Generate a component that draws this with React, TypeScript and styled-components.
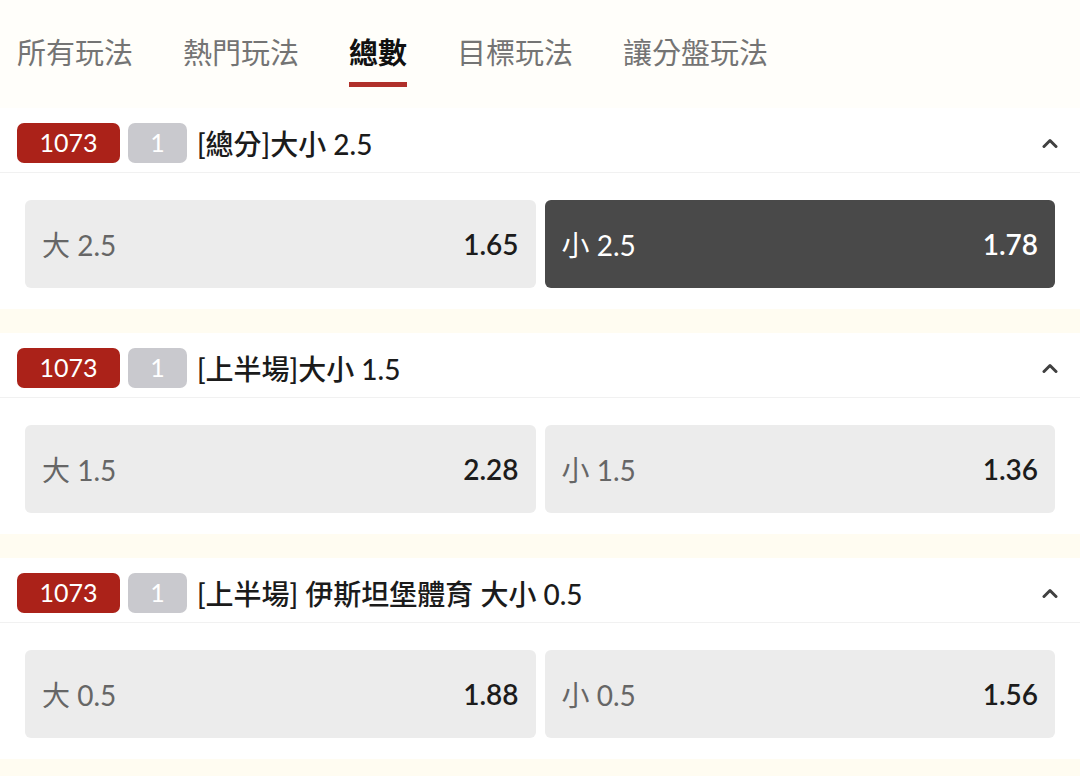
import React from "react";
import styled, { createGlobalStyle } from "styled-components";

const GlobalStyle = createGlobalStyle`
  html, body {
    margin: 0;
    padding: 0;
    background: #fffcf1;
  }
  body {
    font-family: "Lato", "Noto Sans CJK TC", "Noto Sans", sans-serif;
    -webkit-font-smoothing: antialiased;
  }
  * { box-sizing: border-box; }
`;

const Page = styled.div`
  width: 1080px;
  min-height: 776px;
  background: #fffcf1;
`;

const TabBar = styled.nav`
  height: 108px;
  display: flex;
  align-items: flex-start;
  gap: 50px;
  padding: 34px 0 0 17px;
  background: #fffefa;
`;

const Tab = styled.div<{ $active?: boolean }>`
  display: flex;
  flex-direction: column;
  align-items: stretch;
  font-family: "Noto Sans CJK TC", "Lato", sans-serif;
  font-size: 29px;
  line-height: 34px;
  font-weight: ${(p) => (p.$active ? 700 : 400)};
  color: ${(p) => (p.$active ? "#111111" : "#747474")};
  white-space: nowrap;
`;

const TabLine = styled.span<{ $active?: boolean }>`
  display: block;
  margin-top: 14px;
  height: 5px;
  background: ${(p) => (p.$active ? "#b0302a" : "transparent")};
`;

const Card = styled.section`
  background: #ffffff;
  margin-bottom: 24px;
`;

const CardHeader = styled.header`
  height: 65px;
  display: flex;
  align-items: center;
  padding: 5px 22px 0 17px;
  border-bottom: 1px solid #f1f1f1;
`;

const Badge = styled.span<{ $tone: "red" | "grey" }>`
  display: inline-flex;
  align-items: center;
  justify-content: center;
  height: 40px;
  width: ${(p) => (p.$tone === "red" ? "103px" : "59px")};
  margin-right: ${(p) => (p.$tone === "red" ? "8px" : "10px")};
  border-radius: 7px;
  background: ${(p) => (p.$tone === "red" ? "#ab2219" : "#c9c9ce")};
  color: #ffffff;
  font-family: "Lato", sans-serif;
  font-size: 25px;
  line-height: 1;
`;

const Title = styled.h3`
  flex: 1;
  margin: 0;
  font-family: "Lato", "Noto Sans CJK TC", sans-serif;
  font-size: 28px;
  font-weight: 500;
  color: #1b1b1b;
  white-space: nowrap;
`;

const Chevron = styled.svg`
  width: 16px;
  height: 10px;
  flex: none;
`;

const OddsRow = styled.div`
  display: grid;
  grid-template-columns: 1fr 1fr;
  gap: 9px;
  padding: 27px 25px 21px;
`;

const OddsButton = styled.button<{ $selected?: boolean }>`
  height: 88px;
  display: flex;
  align-items: center;
  justify-content: space-between;
  padding: 0 17px;
  border: none;
  border-radius: 6px;
  background: ${(p) => (p.$selected ? "#494949" : "#ececec")};
  font-family: "Lato", "Noto Sans CJK TC", sans-serif;
  cursor: pointer;
`;

const Label = styled.span<{ $selected?: boolean }>`
  font-size: 28px;
  color: ${(p) => (p.$selected ? "#ffffff" : "#666666")};
`;

const Price = styled.span<{ $selected?: boolean }>`
  font-size: 28px;
  font-weight: 600;
  color: ${(p) => (p.$selected ? "#ffffff" : "#1c1c1c")};
`;

type Market = {
  title: string;
  over: { label: string; price: string };
  under: { label: string; price: string };
  selected?: "over" | "under";
};

const markets: Market[] = [
  {
    title: "[總分]大小 2.5",
    over: { label: "大 2.5", price: "1.65" },
    under: { label: "小 2.5", price: "1.78" },
    selected: "under",
  },
  {
    title: "[上半場]大小 1.5",
    over: { label: "大 1.5", price: "2.28" },
    under: { label: "小 1.5", price: "1.36" },
  },
  {
    title: "[上半場] 伊斯坦堡體育 大小 0.5",
    over: { label: "大 0.5", price: "1.88" },
    under: { label: "小 0.5", price: "1.56" },
  },
];

const tabs = ["所有玩法", "熱門玩法", "總數", "目標玩法", "讓分盤玩法"];

export default function App() {
  return (
    <Page>
      <GlobalStyle />
      <TabBar>
        {tabs.map((t) => (
          <Tab key={t} $active={t === "總數"}>
            {t}
            <TabLine $active={t === "總數"} />
          </Tab>
        ))}
      </TabBar>
      {markets.map((m) => (
        <Card key={m.title}>
          <CardHeader>
            <Badge $tone="red">1073</Badge>
            <Badge $tone="grey">1</Badge>
            <Title>{m.title}</Title>
            <Chevron viewBox="0 0 16 10">
              <path
                d="M2 8.5 L8 2.5 L14 8.5"
                fill="none"
                stroke="#404040"
                strokeWidth="3"
                strokeLinecap="round"
                strokeLinejoin="round"
              />
            </Chevron>
          </CardHeader>
          <OddsRow>
            <OddsButton $selected={m.selected === "over"}>
              <Label $selected={m.selected === "over"}>{m.over.label}</Label>
              <Price $selected={m.selected === "over"}>{m.over.price}</Price>
            </OddsButton>
            <OddsButton $selected={m.selected === "under"}>
              <Label $selected={m.selected === "under"}>{m.under.label}</Label>
              <Price $selected={m.selected === "under"}>{m.under.price}</Price>
            </OddsButton>
          </OddsRow>
        </Card>
      ))}
    </Page>
  );
}
